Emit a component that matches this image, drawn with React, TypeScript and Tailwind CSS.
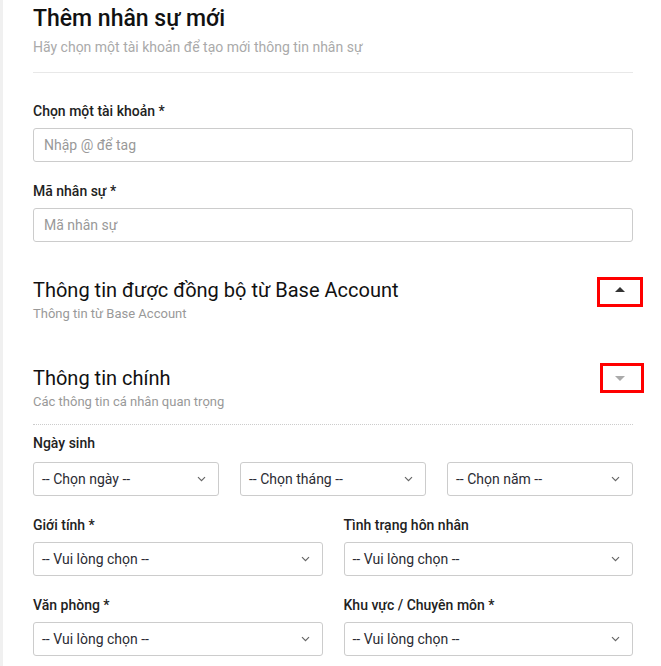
import React from "react";

function Chevron() {
  return (
    <svg width="9" height="6" viewBox="0 0 9 6" className="shrink-0">
      <path d="M1 1.2l3.5 3.5L8 1.2" fill="none" stroke="#666" strokeWidth="1.2" />
    </svg>
  );
}

function FakeSelect({ text }: { text: string }) {
  return (
    <div className="flex h-[34px] w-full items-center justify-between rounded-[3px] border border-[#ccc] bg-white pl-[8px] pr-[12px] text-[14px] text-[#2b2b33]">
      <span>{text}</span>
      <Chevron />
    </div>
  );
}

function Label({ children }: { children: React.ReactNode }) {
  return <div className="text-[14px] leading-[20px] font-medium text-[#222]">{children}</div>;
}

export default function App() {
  return (
    <div className="flex min-h-[666px] bg-white font-['Roboto',sans-serif]">
      <div className="w-[3px] shrink-0 bg-[#f0f0f0]" />
      <div className="flex-1 pl-[30px] pr-[28px] pt-[4px]">
        <h1 className="text-[23px] leading-[29px] font-medium text-[#111]">Thêm nhân sự mới</h1>
        <p className="mt-[4px] text-[14px] leading-[20px] text-[#aaa]">
          Hãy chọn một tài khoản để tạo mới thông tin nhân sự
        </p>
        <div className="mt-[15px] border-t border-[#e8e8e8]" />

        <div className="mt-[28px]">
          <Label>Chọn một tài khoản *</Label>
          <input
            className="mt-[7px] h-[34px] w-full rounded-[3px] border border-[#ccc] px-[10px] text-[14px] text-[#333] outline-none placeholder:text-[#999]"
            placeholder="Nhập @ để tag"
          />
        </div>

        <div className="mt-[19px]">
          <Label>Mã nhân sự *</Label>
          <input
            className="mt-[7px] h-[34px] w-full rounded-[3px] border border-[#ccc] px-[10px] text-[14px] text-[#333] outline-none placeholder:text-[#999]"
            placeholder="Mã nhân sự"
          />
        </div>

        <div className="relative mt-[36px]">
          <h2 className="text-[20px] leading-[24px] font-normal text-[#111]">
            Thông tin được đồng bộ từ Base Account
          </h2>
          <p className="mt-[3px] text-[13px] leading-[18px] text-[#999]">Thông tin từ Base Account</p>
          <div className="absolute right-[-10px] top-[-1px] flex h-[30px] w-[46px] items-center justify-center border-[3px] border-[#ff0000] pb-[5px]">
            <svg width="10" height="5" viewBox="0 0 10 5">
              <path d="M0 5L5 0L10 5Z" fill="#333" />
            </svg>
          </div>
        </div>

        <div className="relative mt-[43px]">
          <h2 className="text-[20px] leading-[24px] font-normal text-[#111]">Thông tin chính</h2>
          <p className="mt-[3px] text-[13px] leading-[18px] text-[#999]">Các thông tin cá nhân quan trọng</p>
          <div className="absolute right-[-11px] top-[-3px] flex h-[30px] w-[44px] items-center justify-center border-[3px] border-[#ff0000] pr-[4px]">
            <svg width="10" height="5" viewBox="0 0 10 5">
              <path d="M0 0L5 5L10 0Z" fill="#aaa" />
            </svg>
          </div>
        </div>

        <div className="mt-[13px] border-t border-dotted border-[#ccc]" />

        <div className="mt-[8px]">
          <Label>Ngày sinh</Label>
          <div className="mt-[9px] grid grid-cols-3 gap-[21px]">
            <FakeSelect text="-- Chọn ngày --" />
            <FakeSelect text="-- Chọn tháng --" />
            <FakeSelect text="-- Chọn năm --" />
          </div>
        </div>

        <div className="mt-[19px] grid grid-cols-2 gap-x-[21px]">
          <div>
            <Label>Giới tính *</Label>
            <div className="mt-[7px]">
              <FakeSelect text="-- Vui lòng chọn --" />
            </div>
          </div>
          <div>
            <Label>Tình trạng hôn nhân</Label>
            <div className="mt-[7px]">
              <FakeSelect text="-- Vui lòng chọn --" />
            </div>
          </div>
        </div>

        <div className="mt-[19px] grid grid-cols-2 gap-x-[21px]">
          <div>
            <Label>Văn phòng *</Label>
            <div className="mt-[7px]">
              <FakeSelect text="-- Vui lòng chọn --" />
            </div>
          </div>
          <div>
            <Label>Khu vực / Chuyên môn *</Label>
            <div className="mt-[7px]">
              <FakeSelect text="-- Vui lòng chọn --" />
            </div>
          </div>
        </div>
      </div>
    </div>
  );
}
